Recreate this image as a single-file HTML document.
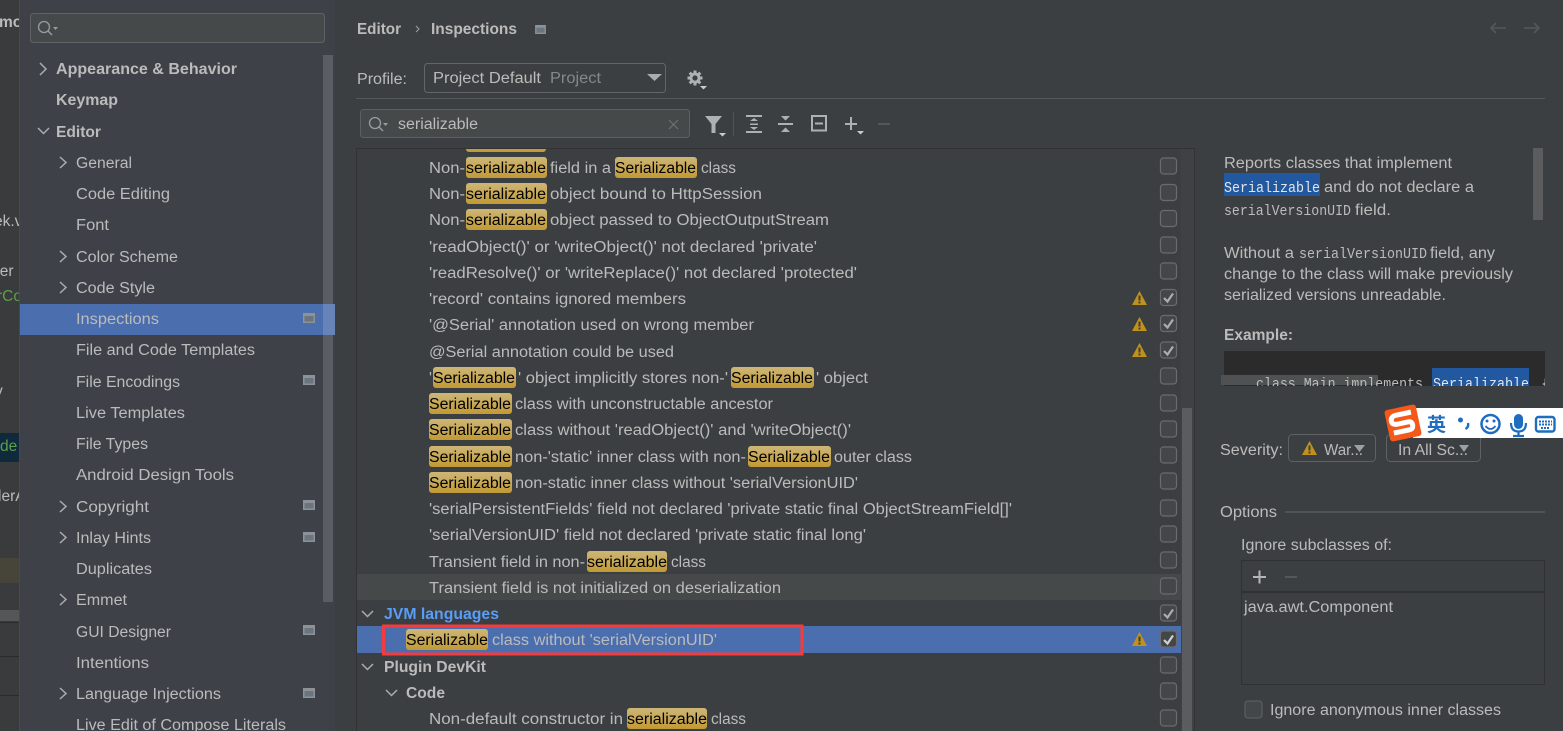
<!DOCTYPE html>
<html><head><meta charset="utf-8"><style>
html,body{margin:0;padding:0;background:#3c3f41;overflow:hidden}
svg{display:block}
text{font-family:"Liberation Sans","Noto Sans CJK SC",sans-serif;font-size:15.5px;fill:#bbbbbb}
.b{font-weight:bold}
.m{font-family:"Liberation Mono",monospace;font-size:15px}
.chev{fill:none;stroke:#a9adb0;stroke-width:1.5}
.ck{fill:#43474a;stroke:#6b6b6b;stroke-width:1.2}
.tk{fill:none;stroke:#adadad;stroke-width:2.2}
.hl{fill:url(#g)}
.ic{fill:#aeb1b3}
</style></head><body>
<svg xmlns="http://www.w3.org/2000/svg" width="1563" height="731" viewBox="0 0 1563 731">
<defs>
<linearGradient id="g" x1="0" y1="0" x2="0" y2="1"><stop offset="0" stop-color="#cdb678"/><stop offset="1" stop-color="#c29a33"/></linearGradient>
<clipPath id="cb"><rect x="1221" y="351" width="324" height="35"/></clipPath>
<clipPath id="tc"><rect x="357" y="149" width="824" height="582"/></clipPath>
<symbol id="w" viewBox="0 0 15 14"><path d="M7.5 0 L15 14 H0 Z" fill="#c1921a"/><rect x="6.5" y="4.5" width="2" height="5" fill="#3c3f41"/><rect x="6.5" y="10.5" width="2" height="2" fill="#3c3f41"/></symbol>
<symbol id="cf" viewBox="0 0 12 10"><rect x="0" y="0" width="12" height="10" fill="#8e9296"/><rect x="1.5" y="3" width="9" height="5.5" fill="#6a7580"/></symbol>
</defs>

<!-- left strip -->
<rect x="0" y="0" width="19" height="731" fill="#393b3d"/>
<rect x="0" y="433" width="19" height="29" fill="#0f2a3d"/>
<rect x="0" y="558" width="19" height="25" fill="#47443a"/>
<rect x="0" y="610" width="19" height="11" fill="#545658"/>
<rect x="0" y="622" width="19" height="1" fill="#2b2b2b"/>
<rect x="0" y="656" width="19" height="1" fill="#2b2b2b"/>
<rect x="0" y="695" width="19" height="1" fill="#2b2b2b"/>
<svg x="0" y="0" width="19" height="731">
<text x="-1" y="27" class="b">mo</text>
<text x="-6" y="226">ek.v</text>
<text x="-8" y="276">ver</text>
<text x="-3" y="301" style="fill:#5f9e4a">rCo</text>
<text x="-5" y="396">y</text>
<text x="0" y="451" style="fill:#5f9e4a">de</text>
<text x="-2" y="501">lerA</text>
</svg>

<!-- sidebar -->
<rect x="19" y="0" width="316" height="731" fill="#3e4148"/>
<rect x="19" y="0" width="1" height="731" fill="#46494f"/>
<rect x="30.5" y="13.5" width="294" height="29" rx="3" fill="#45494a" stroke="#5e6264"/>
<circle cx="44" cy="27" r="5.5" fill="none" stroke="#9a9da0" stroke-width="1.3"/><path d="M48 31 L52 35" stroke="#9a9da0" stroke-width="1.4"/><path d="M53 27 h5 l-2.5 3 z" fill="#9a9da0"/>
<rect x="323" y="55" width="10" height="547" fill="#5a5d63"/>
<rect x="20" y="304" width="315" height="31" fill="#4b6eaf"/>
<rect x="323" y="304" width="12" height="31" fill="#6783b8"/>

<path class="chev" d="M40 63 L46 69 L40 75"/>
<path class="chev" d="M38 128 L43.5 133.500 L49 128"/>
<path class="chev" d="M60 157 L66 162.500 L60 168"/>
<path class="chev" d="M60 251 L66 256.500 L60 262"/>
<path class="chev" d="M60 282 L66 287.500 L60 293"/>
<path class="chev" d="M60 501 L66 506.500 L60 512"/>
<path class="chev" d="M60 532 L66 537.500 L60 543"/>
<path class="chev" d="M60 594 L66 599.500 L60 605"/>
<path class="chev" d="M60 688 L66 693.500 L60 699"/>

<text class="b" x="56" y="74" textLength="181" lengthAdjust="spacingAndGlyphs">Appearance &amp; Behavior</text>
<text class="b" x="56" y="105" textLength="62" lengthAdjust="spacingAndGlyphs">Keymap</text>
<text class="b" x="56" y="137" textLength="45" lengthAdjust="spacingAndGlyphs">Editor</text>
<text x="76" y="168" textLength="56" lengthAdjust="spacingAndGlyphs">General</text>
<text x="76" y="199" textLength="94" lengthAdjust="spacingAndGlyphs">Code Editing</text>
<text x="76" y="230" textLength="33" lengthAdjust="spacingAndGlyphs">Font</text>
<text x="76" y="262" textLength="102" lengthAdjust="spacingAndGlyphs">Color Scheme</text>
<text x="76" y="293" textLength="79" lengthAdjust="spacingAndGlyphs">Code Style</text>
<text x="76" y="324" textLength="83" lengthAdjust="spacingAndGlyphs">Inspections</text>
<text x="76" y="355" textLength="179" lengthAdjust="spacingAndGlyphs">File and Code Templates</text>
<text x="76" y="387" textLength="104" lengthAdjust="spacingAndGlyphs">File Encodings</text>
<text x="76" y="418" textLength="109" lengthAdjust="spacingAndGlyphs">Live Templates</text>
<text x="76" y="449" textLength="72" lengthAdjust="spacingAndGlyphs">File Types</text>
<text x="76" y="480" textLength="158" lengthAdjust="spacingAndGlyphs">Android Design Tools</text>
<text x="76" y="512" textLength="73" lengthAdjust="spacingAndGlyphs">Copyright</text>
<text x="76" y="543" textLength="75" lengthAdjust="spacingAndGlyphs">Inlay Hints</text>
<text x="76" y="574" textLength="76" lengthAdjust="spacingAndGlyphs">Duplicates</text>
<text x="76" y="605" textLength="51" lengthAdjust="spacingAndGlyphs">Emmet</text>
<text x="76" y="637" textLength="95" lengthAdjust="spacingAndGlyphs">GUI Designer</text>
<text x="76" y="668" textLength="73" lengthAdjust="spacingAndGlyphs">Intentions</text>
<text x="76" y="699" textLength="145" lengthAdjust="spacingAndGlyphs">Language Injections</text>
<text x="76" y="730" textLength="210" lengthAdjust="spacingAndGlyphs">Live Edit of Compose Literals</text>
<use href="#cf" x="303" y="313" width="12" height="10"/>
<use href="#cf" x="303" y="375" width="12" height="10"/>
<use href="#cf" x="303" y="500" width="12" height="10"/>
<use href="#cf" x="303" y="532" width="12" height="10"/>
<use href="#cf" x="303" y="625" width="12" height="10"/>
<use href="#cf" x="303" y="688" width="12" height="10"/>

<!-- header -->
<text class="b" x="357" y="34" textLength="44" lengthAdjust="spacingAndGlyphs">Editor</text>
<path d="M416 26 L419 29 L416 32" fill="none" stroke="#9a9da0" stroke-width="1.1"/>
<text class="b" x="431" y="34" textLength="86" lengthAdjust="spacingAndGlyphs">Inspections</text>
<use href="#cf" x="535" y="25" width="11" height="9"/>
<path d="M1491 28 H1506 M1496 23 L1491 28 L1496 33 M1524 28 H1539 M1534 23 L1539 28 L1534 33" fill="none" stroke="#55585a" stroke-width="1.6"/>

<text x="357" y="84" textLength="50" lengthAdjust="spacingAndGlyphs">Profile:</text>
<rect x="424.500" y="63.500" width="241" height="29" rx="3" fill="#3c3f41" stroke="#62666a"/>
<text x="433" y="83" textLength="108" lengthAdjust="spacingAndGlyphs">Project Default</text>
<text x="550" y="83" textLength="51" lengthAdjust="spacingAndGlyphs" style="fill:#85888a">Project</text>
<path d="M647 74 h15 l-7.500 7 z" fill="#a9adb0"/>
<path d="M695 70.500 v15 M687.500 78 h15 M689.700 72.700 l10.600 10.600 M700.300 72.700 l-10.600 10.600" stroke="#aeb1b3" stroke-width="3"/>
<circle cx="695" cy="78" r="5.500" fill="#aeb1b3"/>
<circle cx="695" cy="78" r="2.600" fill="#3c3f41"/>
<path d="M700 86 h7 l-3.500 3.500 z" fill="#c9cbcc"/>
<rect x="356" y="98" width="1189" height="1" fill="#555759"/>

<rect x="360.500" y="109.500" width="329" height="28" rx="3" fill="#45494a" stroke="#5c6062"/>
<circle cx="375" cy="123" r="5.500" fill="none" stroke="#9a9da0" stroke-width="1.3"/><path d="M379 127 L383 131" stroke="#9a9da0" stroke-width="1.400"/><path d="M383 123 h5 l-2.500 3 z" fill="#9a9da0"/>
<text x="398" y="129" textLength="80" lengthAdjust="spacingAndGlyphs">serializable</text>
<path d="M669 120 L678 129 M678 120 L669 129" stroke="#6c7072" stroke-width="1.200"/>

<path class="ic" d="M705 116 h17 l-6.500 8 v9 h-4 v-9 z"/>
<path d="M719 133 h7 l-3.500 3.500 z" fill="#c9cbcc"/>
<rect x="733" y="112" width="1" height="24" fill="#515355"/>
<path class="ic" d="M746 115 h16 v2 h-16 z M746 131 h16 v2 h-16 z M750 121 l4 -3 l4 3 z M750 127 l4 3 l4 -3 z M750 123.500 h8 v1.500 h-8 z"/>
<path class="ic" d="M778 123 h15 v2 h-15 z M781 116 h9 l-4.500 4.500 z M781 132 h9 l-4.500 -4.500 z"/>
<rect x="812" y="116" width="14" height="14.500" fill="none" stroke="#aeb1b3" stroke-width="2"/>
<rect x="815" y="122.500" width="8" height="2" fill="#aeb1b3"/>
<path class="ic" d="M845 123 h12 v2 h-12 z M850 117 h2 v13 h-2 z"/>
<path d="M857 131 h7 l-3.500 3.500 z" fill="#c9cbcc"/>
<rect x="878" y="123" width="12" height="2" fill="#55585a"/>

<!-- tree -->
<rect x="356" y="148" width="839" height="1" fill="#323232"/>
<rect x="356" y="149" width="1" height="582" fill="#323232"/>
<rect x="1194" y="148" width="1" height="583" fill="#323232"/>
<rect x="1181" y="149" width="13" height="582" fill="#3f4244"/>
<rect x="1182" y="408" width="10" height="323" fill="#5a5d5e"/>
<rect x="357" y="574" width="824" height="26" fill="#45494a"/>
<rect x="357" y="626" width="824" height="27" fill="#4b6eaf"/>

<g clip-path="url(#tc)"><rect class="hl" x="466" y="132" width="80" height="20" rx="3"/></g>

<!-- row highlights -->
<rect class="hl" x="466" y="157" width="81" height="21" rx="3"/>
<rect class="hl" x="615" y="157" width="82" height="21" rx="3"/>
<rect class="hl" x="466" y="183" width="81" height="21" rx="3"/>
<rect class="hl" x="466" y="209" width="81" height="21" rx="3"/>
<rect class="hl" x="433" y="367" width="83" height="21" rx="3"/>
<rect class="hl" x="731" y="367" width="83" height="21" rx="3"/>
<rect class="hl" x="429" y="393" width="83" height="21" rx="3"/>
<rect class="hl" x="429" y="419" width="83" height="21" rx="3"/>
<rect class="hl" x="429" y="446" width="83" height="21" rx="3"/>
<rect class="hl" x="748" y="446" width="83" height="21" rx="3"/>
<rect class="hl" x="429" y="472" width="83" height="21" rx="3"/>
<rect class="hl" x="587" y="551" width="80" height="21" rx="3"/>
<rect class="hl" x="406" y="629" width="82" height="21" rx="3"/>
<rect class="hl" x="627" y="708" width="80" height="21" rx="3"/>

<text x="429" y="173" textLength="36" lengthAdjust="spacingAndGlyphs">Non-</text>
<text style="fill:#000" x="466" y="173" textLength="80" lengthAdjust="spacingAndGlyphs">serializable</text>
<text x="550" y="173" textLength="61" lengthAdjust="spacingAndGlyphs">field in a</text>
<text style="fill:#000" x="615" y="173" textLength="81" lengthAdjust="spacingAndGlyphs">Serializable</text>
<text x="701" y="173" textLength="35" lengthAdjust="spacingAndGlyphs">class</text>

<text x="429" y="199" textLength="36" lengthAdjust="spacingAndGlyphs">Non-</text>
<text style="fill:#000" x="466" y="199" textLength="80" lengthAdjust="spacingAndGlyphs">serializable</text>
<text x="550" y="199" textLength="212" lengthAdjust="spacingAndGlyphs">object bound to HttpSession</text>

<text x="429" y="225" textLength="36" lengthAdjust="spacingAndGlyphs">Non-</text>
<text style="fill:#000" x="466" y="225" textLength="80" lengthAdjust="spacingAndGlyphs">serializable</text>
<text x="550" y="225" textLength="279" lengthAdjust="spacingAndGlyphs">object passed to ObjectOutputStream</text>

<text x="429" y="252" textLength="388" lengthAdjust="spacingAndGlyphs">'readObject()' or 'writeObject()' not declared 'private'</text>
<text x="429" y="278" textLength="428" lengthAdjust="spacingAndGlyphs">'readResolve()' or 'writeReplace()' not declared 'protected'</text>
<text x="429" y="304" textLength="257" lengthAdjust="spacingAndGlyphs">'record' contains ignored members</text>
<text x="429" y="330" textLength="325" lengthAdjust="spacingAndGlyphs">'@Serial' annotation used on wrong member</text>
<text x="429" y="357" textLength="245" lengthAdjust="spacingAndGlyphs">@Serial annotation could be used</text>

<text x="429" y="383">'</text>
<text style="fill:#000" x="433" y="383" textLength="82" lengthAdjust="spacingAndGlyphs">Serializable</text>
<text x="518" y="383" textLength="210" lengthAdjust="spacingAndGlyphs">' object implicitly stores non-'</text>
<text style="fill:#000" x="731" y="383" textLength="82" lengthAdjust="spacingAndGlyphs">Serializable</text>
<text x="816" y="383" textLength="52" lengthAdjust="spacingAndGlyphs">' object</text>

<text style="fill:#000" x="429" y="409" textLength="82" lengthAdjust="spacingAndGlyphs">Serializable</text>
<text x="515" y="409" textLength="258" lengthAdjust="spacingAndGlyphs">class with unconstructable ancestor</text>

<text style="fill:#000" x="429" y="435" textLength="82" lengthAdjust="spacingAndGlyphs">Serializable</text>
<text x="515" y="435" textLength="336" lengthAdjust="spacingAndGlyphs">class without 'readObject()' and 'writeObject()'</text>

<text style="fill:#000" x="429" y="462" textLength="82" lengthAdjust="spacingAndGlyphs">Serializable</text>
<text x="515" y="462" textLength="231" lengthAdjust="spacingAndGlyphs">non-'static' inner class with non-</text>
<text style="fill:#000" x="748" y="462" textLength="82" lengthAdjust="spacingAndGlyphs">Serializable</text>
<text x="834" y="462" textLength="78" lengthAdjust="spacingAndGlyphs">outer class</text>

<text style="fill:#000" x="429" y="488" textLength="82" lengthAdjust="spacingAndGlyphs">Serializable</text>
<text x="515" y="488" textLength="343" lengthAdjust="spacingAndGlyphs">non-static inner class without 'serialVersionUID'</text>

<text x="429" y="514" textLength="583" lengthAdjust="spacingAndGlyphs">'serialPersistentFields' field not declared 'private static final ObjectStreamField[]'</text>
<text x="429" y="540" textLength="437" lengthAdjust="spacingAndGlyphs">'serialVersionUID' field not declared 'private static final long'</text>

<text x="429" y="567" textLength="156" lengthAdjust="spacingAndGlyphs">Transient field in non-</text>
<text style="fill:#000" x="587" y="567" textLength="80" lengthAdjust="spacingAndGlyphs">serializable</text>
<text x="671" y="567" textLength="35" lengthAdjust="spacingAndGlyphs">class</text>

<text x="429" y="593" textLength="352" lengthAdjust="spacingAndGlyphs">Transient field is not initialized on deserialization</text>

<path class="chev" d="M362 611 L367.500 616.500 L373 611"/>
<text class="b" style="fill:#589df6" x="384" y="619" textLength="115" lengthAdjust="spacingAndGlyphs">JVM languages</text>

<text style="fill:#000" x="406" y="645" textLength="82" lengthAdjust="spacingAndGlyphs">Serializable</text>
<text x="492" y="645" textLength="225" lengthAdjust="spacingAndGlyphs">class without 'serialVersionUID'</text>
<rect x="383.500" y="626" width="418.500" height="28" fill="none" stroke="#f43c3c" stroke-width="3"/>

<path class="chev" d="M362 664 L367.500 669.500 L373 664"/>
<text class="b" x="384" y="672" textLength="102" lengthAdjust="spacingAndGlyphs">Plugin DevKit</text>
<path class="chev" d="M386 690 L391.500 695.500 L397 690"/>
<text class="b" x="406" y="698" textLength="39" lengthAdjust="spacingAndGlyphs">Code</text>
<text x="429" y="724" textLength="194" lengthAdjust="spacingAndGlyphs">Non-default constructor in</text>
<text style="fill:#000" x="627" y="724" textLength="80" lengthAdjust="spacingAndGlyphs">serializable</text>
<text x="711" y="724" textLength="35" lengthAdjust="spacingAndGlyphs">class</text>

<!-- checkboxes -->
<rect class="ck" x="1160.500" y="158" width="16" height="16" rx="3"/>
<rect class="ck" x="1160.500" y="184.500" width="16" height="16" rx="3"/>
<rect class="ck" x="1160.500" y="210.500" width="16" height="16" rx="3"/>
<rect class="ck" x="1160.500" y="237" width="16" height="16" rx="3"/>
<rect class="ck" x="1160.500" y="263" width="16" height="16" rx="3"/>
<rect class="ck" x="1160.500" y="289.500" width="16" height="16" rx="3"/>
<rect class="ck" x="1160.500" y="315.500" width="16" height="16" rx="3"/>
<rect class="ck" x="1160.500" y="342" width="16" height="16" rx="3"/>
<rect class="ck" x="1160.500" y="368" width="16" height="16" rx="3"/>
<rect class="ck" x="1160.500" y="395" width="16" height="16" rx="3"/>
<rect class="ck" x="1160.500" y="421" width="16" height="16" rx="3"/>
<rect class="ck" x="1160.500" y="447" width="16" height="16" rx="3"/>
<rect class="ck" x="1160.500" y="473" width="16" height="16" rx="3"/>
<rect class="ck" x="1160.500" y="500" width="16" height="16" rx="3"/>
<rect class="ck" x="1160.500" y="526" width="16" height="16" rx="3"/>
<rect class="ck" x="1160.500" y="552" width="16" height="16" rx="3"/>
<rect class="ck" x="1160.500" y="578" width="16" height="16" rx="3"/>
<rect class="ck" x="1160.500" y="605" width="16" height="16" rx="3"/>
<rect class="ck" x="1160.500" y="631" width="16" height="16" rx="3"/>
<rect class="ck" x="1160.500" y="657" width="16" height="16" rx="3"/>
<rect class="ck" x="1160.500" y="683" width="16" height="16" rx="3"/>
<rect class="ck" x="1160.500" y="710" width="16" height="16" rx="3"/>
<path class="tk" d="M1164 298 L1167.500 301.500 L1173 293.500"/>
<path class="tk" d="M1164 324 L1167.500 327.500 L1173 319.500"/>
<path class="tk" d="M1164 351 L1167.500 354.500 L1173 346.500"/>
<path class="tk" d="M1164 614 L1167.500 617.500 L1173 609.500"/>
<path class="tk" style="stroke:#d0d0d0" d="M1164 640 L1167.500 643.500 L1173 635.500"/>
<use href="#w" x="1132" y="291" width="15" height="14"/>
<use href="#w" x="1132" y="317" width="15" height="14"/>
<use href="#w" x="1132" y="343" width="15" height="14"/>
<use href="#w" x="1132" y="632" width="15" height="14"/>

<!-- description -->
<rect x="1533" y="148" width="10" height="72" fill="#5a5c5e"/>
<text x="1224" y="168" textLength="228" lengthAdjust="spacingAndGlyphs">Reports classes that implement</text>
<rect x="1224" y="173" width="96" height="23" fill="#21589f"/>
<text class="m" style="fill:#e4e6e8" x="1224" y="192" textLength="96" lengthAdjust="spacingAndGlyphs">Serializable</text>
<text x="1324" y="192" textLength="150" lengthAdjust="spacingAndGlyphs">and do not declare a</text>
<text class="m" x="1224" y="215" textLength="127" lengthAdjust="spacingAndGlyphs">serialVersionUID</text>
<text x="1355" y="215" textLength="36" lengthAdjust="spacingAndGlyphs">field.</text>
<text x="1224" y="258" textLength="70" lengthAdjust="spacingAndGlyphs">Without a</text>
<text class="m" x="1299" y="258" textLength="128" lengthAdjust="spacingAndGlyphs">serialVersionUID</text>
<text x="1430" y="258" textLength="65" lengthAdjust="spacingAndGlyphs">field, any</text>
<text x="1224" y="279" textLength="289" lengthAdjust="spacingAndGlyphs">change to the class will make previously</text>
<text x="1224" y="300" textLength="222" lengthAdjust="spacingAndGlyphs">serialized versions unreadable.</text>
<text class="b" x="1224" y="340" textLength="69" lengthAdjust="spacingAndGlyphs">Example:</text>

<rect x="1224" y="351" width="321" height="35" fill="#2b2b2b"/>
<rect x="1432" y="368" width="97" height="18" fill="#21589f"/>
<rect x="1221" y="375" width="157" height="10" fill="#4f5152"/>
<g clip-path="url(#cb)">
<text class="m" x="1256" y="388" textLength="167" lengthAdjust="spacingAndGlyphs">class Main implements</text>
<text class="m" style="fill:#e4e6e8" x="1433" y="388" textLength="96" lengthAdjust="spacingAndGlyphs">Serializable</text>
<text class="m" x="1541" y="388">{</text>
</g>

<!-- severity -->
<text x="1220" y="455" textLength="63" lengthAdjust="spacingAndGlyphs">Severity:</text>
<rect x="1288.500" y="434.500" width="87" height="27" rx="4" fill="#3c3f41" stroke="#5e6264"/>
<use href="#w" x="1302" y="441" width="15" height="14"/>
<text x="1324" y="455" textLength="39" lengthAdjust="spacingAndGlyphs">War...</text>
<path d="M1354 445 h11 l-5.500 7 z" fill="#9ea1a3"/>
<rect x="1386.500" y="434.500" width="94" height="27" rx="4" fill="#3c3f41" stroke="#5e6264"/>
<text x="1398" y="455" textLength="70" lengthAdjust="spacingAndGlyphs">In All Sc...</text>
<path d="M1459 445 h10 l-5 7 z" fill="#9ea1a3"/>

<!-- options -->
<text x="1220" y="517" textLength="57" lengthAdjust="spacingAndGlyphs">Options</text>
<rect x="1285" y="511" width="260" height="2" fill="#505254"/>
<text x="1241" y="550" textLength="151" lengthAdjust="spacingAndGlyphs">Ignore subclasses of:</text>
<rect x="1241.500" y="560.500" width="303" height="124" fill="none" stroke="#2f3133"/>
<rect x="1242" y="591" width="302" height="2" fill="#2f3133"/>
<rect x="1253" y="576" width="13" height="2" fill="#b4b6b8"/><rect x="1258.500" y="570.500" width="2" height="13" fill="#b4b6b8"/>
<rect x="1285" y="576" width="12" height="2" fill="#55585a"/>
<text x="1244" y="612" textLength="149" lengthAdjust="spacingAndGlyphs">java.awt.Component</text>
<rect x="1245" y="701" width="17" height="17" rx="3" fill="#43474a" stroke="#5f6365"/>
<text x="1270" y="715" textLength="231" lengthAdjust="spacingAndGlyphs">Ignore anonymous inner classes</text>

<!-- IME bar -->
<rect x="1413" y="408" width="150" height="30" fill="#ffffff"/>
<g transform="rotate(-12 1403 423)">
<rect x="1387" y="407" width="32" height="32" rx="3" fill="#f4591a"/>
<path d="M1413 414 H1398 Q1392 414 1392 419 Q1392 423 1398 423 H1408 Q1412 423 1412 426.500 Q1412 431 1408 431 H1392" fill="none" stroke="#ffffff" stroke-width="5"/>
</g>
<text x="1427" y="431" style="font-size:19px;font-weight:bold;fill:#1f6dc0;font-family:'Noto Sans CJK SC',sans-serif" textLength="19" lengthAdjust="spacingAndGlyphs">英</text>
<circle cx="1460.500" cy="420" r="2.500" fill="#1f6dc0"/>
<path d="M1468 423 Q1469 427 1465.500 429" fill="none" stroke="#1f6dc0" stroke-width="2.400"/>
<circle cx="1490.500" cy="424" r="9" fill="none" stroke="#1f6dc0" stroke-width="2.500"/>
<circle cx="1487" cy="421" r="1.500" fill="#1f6dc0"/><circle cx="1494" cy="421" r="1.500" fill="#1f6dc0"/>
<path d="M1485.500 426 Q1490.500 432 1495.500 426" fill="none" stroke="#1f6dc0" stroke-width="1.800"/>
<rect x="1514" y="414" width="9" height="15" rx="4.500" fill="#1f6dc0"/>
<path d="M1511 423 Q1511 431.500 1518.500 431.500 Q1526 431.500 1526 423 M1518.500 431 V435 M1513 436 H1524" fill="none" stroke="#1f6dc0" stroke-width="2.200"/>
<rect x="1536" y="417" width="18.500" height="14.500" rx="2.500" fill="none" stroke="#1f6dc0" stroke-width="2.400"/>
<path d="M1539 421.500 h13 M1539 424.500 h13 M1541 428 h9" stroke="#1f6dc0" stroke-width="1.900" stroke-dasharray="2 1"/>
</svg>
</body></html>
